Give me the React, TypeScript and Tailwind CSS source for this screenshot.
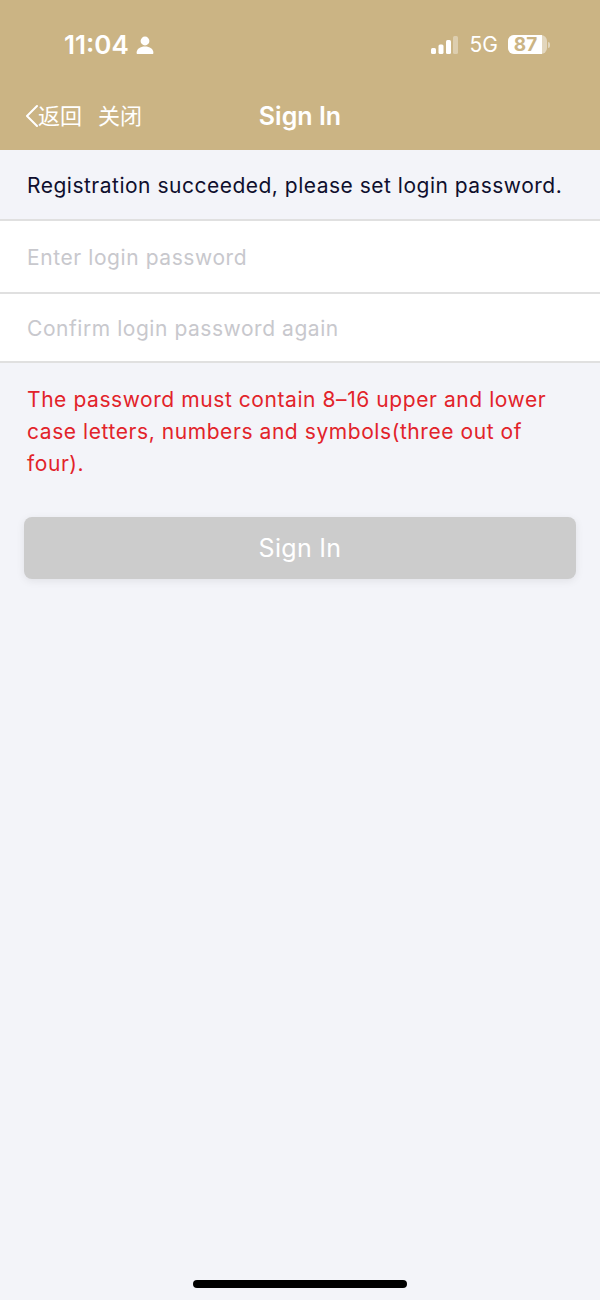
function StatusBar() {
  return (
    <div className="flex h-[90px] items-start justify-between pl-[64px] pr-[50px] pt-[29px] text-white">
      <div className="flex h-[31px] items-center gap-[7px]">
        <span className="text-[26px] font-semibold leading-none">11:04</span>
        <svg width="18" height="18" viewBox="0 0 18 18" fill="#fff">
          <circle cx="9" cy="5" r="4.4" />
          <path d="M.6 17c0-4 3.6-6.4 8.4-6.4s8.400 2.400 8.400 6.400c0 .6-.4 1-1 1H1.600c-.6 0-1-.4-1-1z" />
        </svg>
      </div>
      <div className="flex h-[31px] items-center">
        <svg width="27" height="20" viewBox="0 0 27 20" className="mr-[12px]">
          <rect x="0" y="13" width="5" height="6" rx="1.500" fill="#fff" />
          <rect x="7.500" y="9.500" width="5" height="9.500" rx="1.500" fill="#fff" />
          <rect x="15" y="5" width="5" height="14" rx="1.500" fill="#fff" />
          <rect x="22" y="1" width="5" height="18" rx="1.500" fill="#fff" fillOpacity="0.35" />
        </svg>
        <span className="mr-[10px] text-[21px] leading-none">5G</span>
        <div className="flex h-[19px] w-[39px] items-center rounded-[6px] bg-[#e2d6bd]">
          <div className="flex h-[19px] w-[34px] items-center justify-center rounded-l-[6px] bg-white pl-[1px] text-[19px] font-bold leading-[19px] text-[#cbb484]">
            87
          </div>
        </div>
        <div className="ml-[1px] h-[6px] w-[2px] rounded-r-full bg-[#e2d6bd]" />
      </div>
    </div>
  );
}

function NavBar() {
  return (
    <div className="relative flex h-[60px] items-center pb-[8px] pl-[25px] text-white">
      <svg width="13" height="24" viewBox="0 0 13 24" fill="none" stroke="#fff" strokeWidth="2" strokeLinecap="round" strokeLinejoin="round">
        <path d="M12 2 2 12l10 10" />
      </svg>
      <span className="text-[22px] leading-none">返回</span>
      <span className="ml-[16px] text-[22px] leading-none">关闭</span>
      <span className="absolute inset-x-0 text-center text-[25px] font-semibold leading-none">Sign In</span>
    </div>
  );
}

export default function App() {
  return (
    <div className="relative flex min-h-[1300px] flex-col bg-[#f3f4f9] font-['Inter','Noto_Sans_CJK_SC',sans-serif]">
      <header className="h-[150px] bg-[#cbb484]">
        <StatusBar />
        <NavBar />
      </header>

      <p className="flex h-[69px] items-center whitespace-nowrap px-[27px] pt-[3px] text-[21px] tracking-[0.5px] text-[#0f0f2d]">
        Registration succeeded, please set login password.
      </p>

      <div className="border-t-2 border-[#e0e0e0] bg-white">
        <input
          placeholder="Enter login password"
          className="block h-[71px] w-full bg-transparent px-[27px] pt-[1px] text-[21px] tracking-[0.58px] outline-none placeholder:text-[#c8c8cd]"
        />
      </div>
      <div className="border-y-2 border-[#e0e0e0] bg-white">
        <input
          placeholder="Confirm login password again"
          className="block h-[67px] w-full bg-transparent px-[27px] pt-[1px] text-[21px] tracking-[0.55px] outline-none placeholder:text-[#c8c8cd]"
        />
      </div>

      <p className="px-[27px] pb-[37px] pt-[21px] text-[21px] leading-[32px] tracking-[0.57px] text-[#e2232a]">
        The password must contain 8–16 upper and lower case letters, numbers and symbols(three out of four).
      </p>

      <div className="px-[24px]">
        <button className="h-[62px] w-full rounded-[8px] bg-[#cccccc] pt-[2px] text-[25px] tracking-[0.3px] text-white shadow-[0_2px_8px_rgba(0,0,0,0.08)]">
          Sign In
        </button>
      </div>

      <div className="absolute bottom-[12px] left-[193px] h-[8px] w-[214px] rounded-full bg-black" />
    </div>
  );
}
